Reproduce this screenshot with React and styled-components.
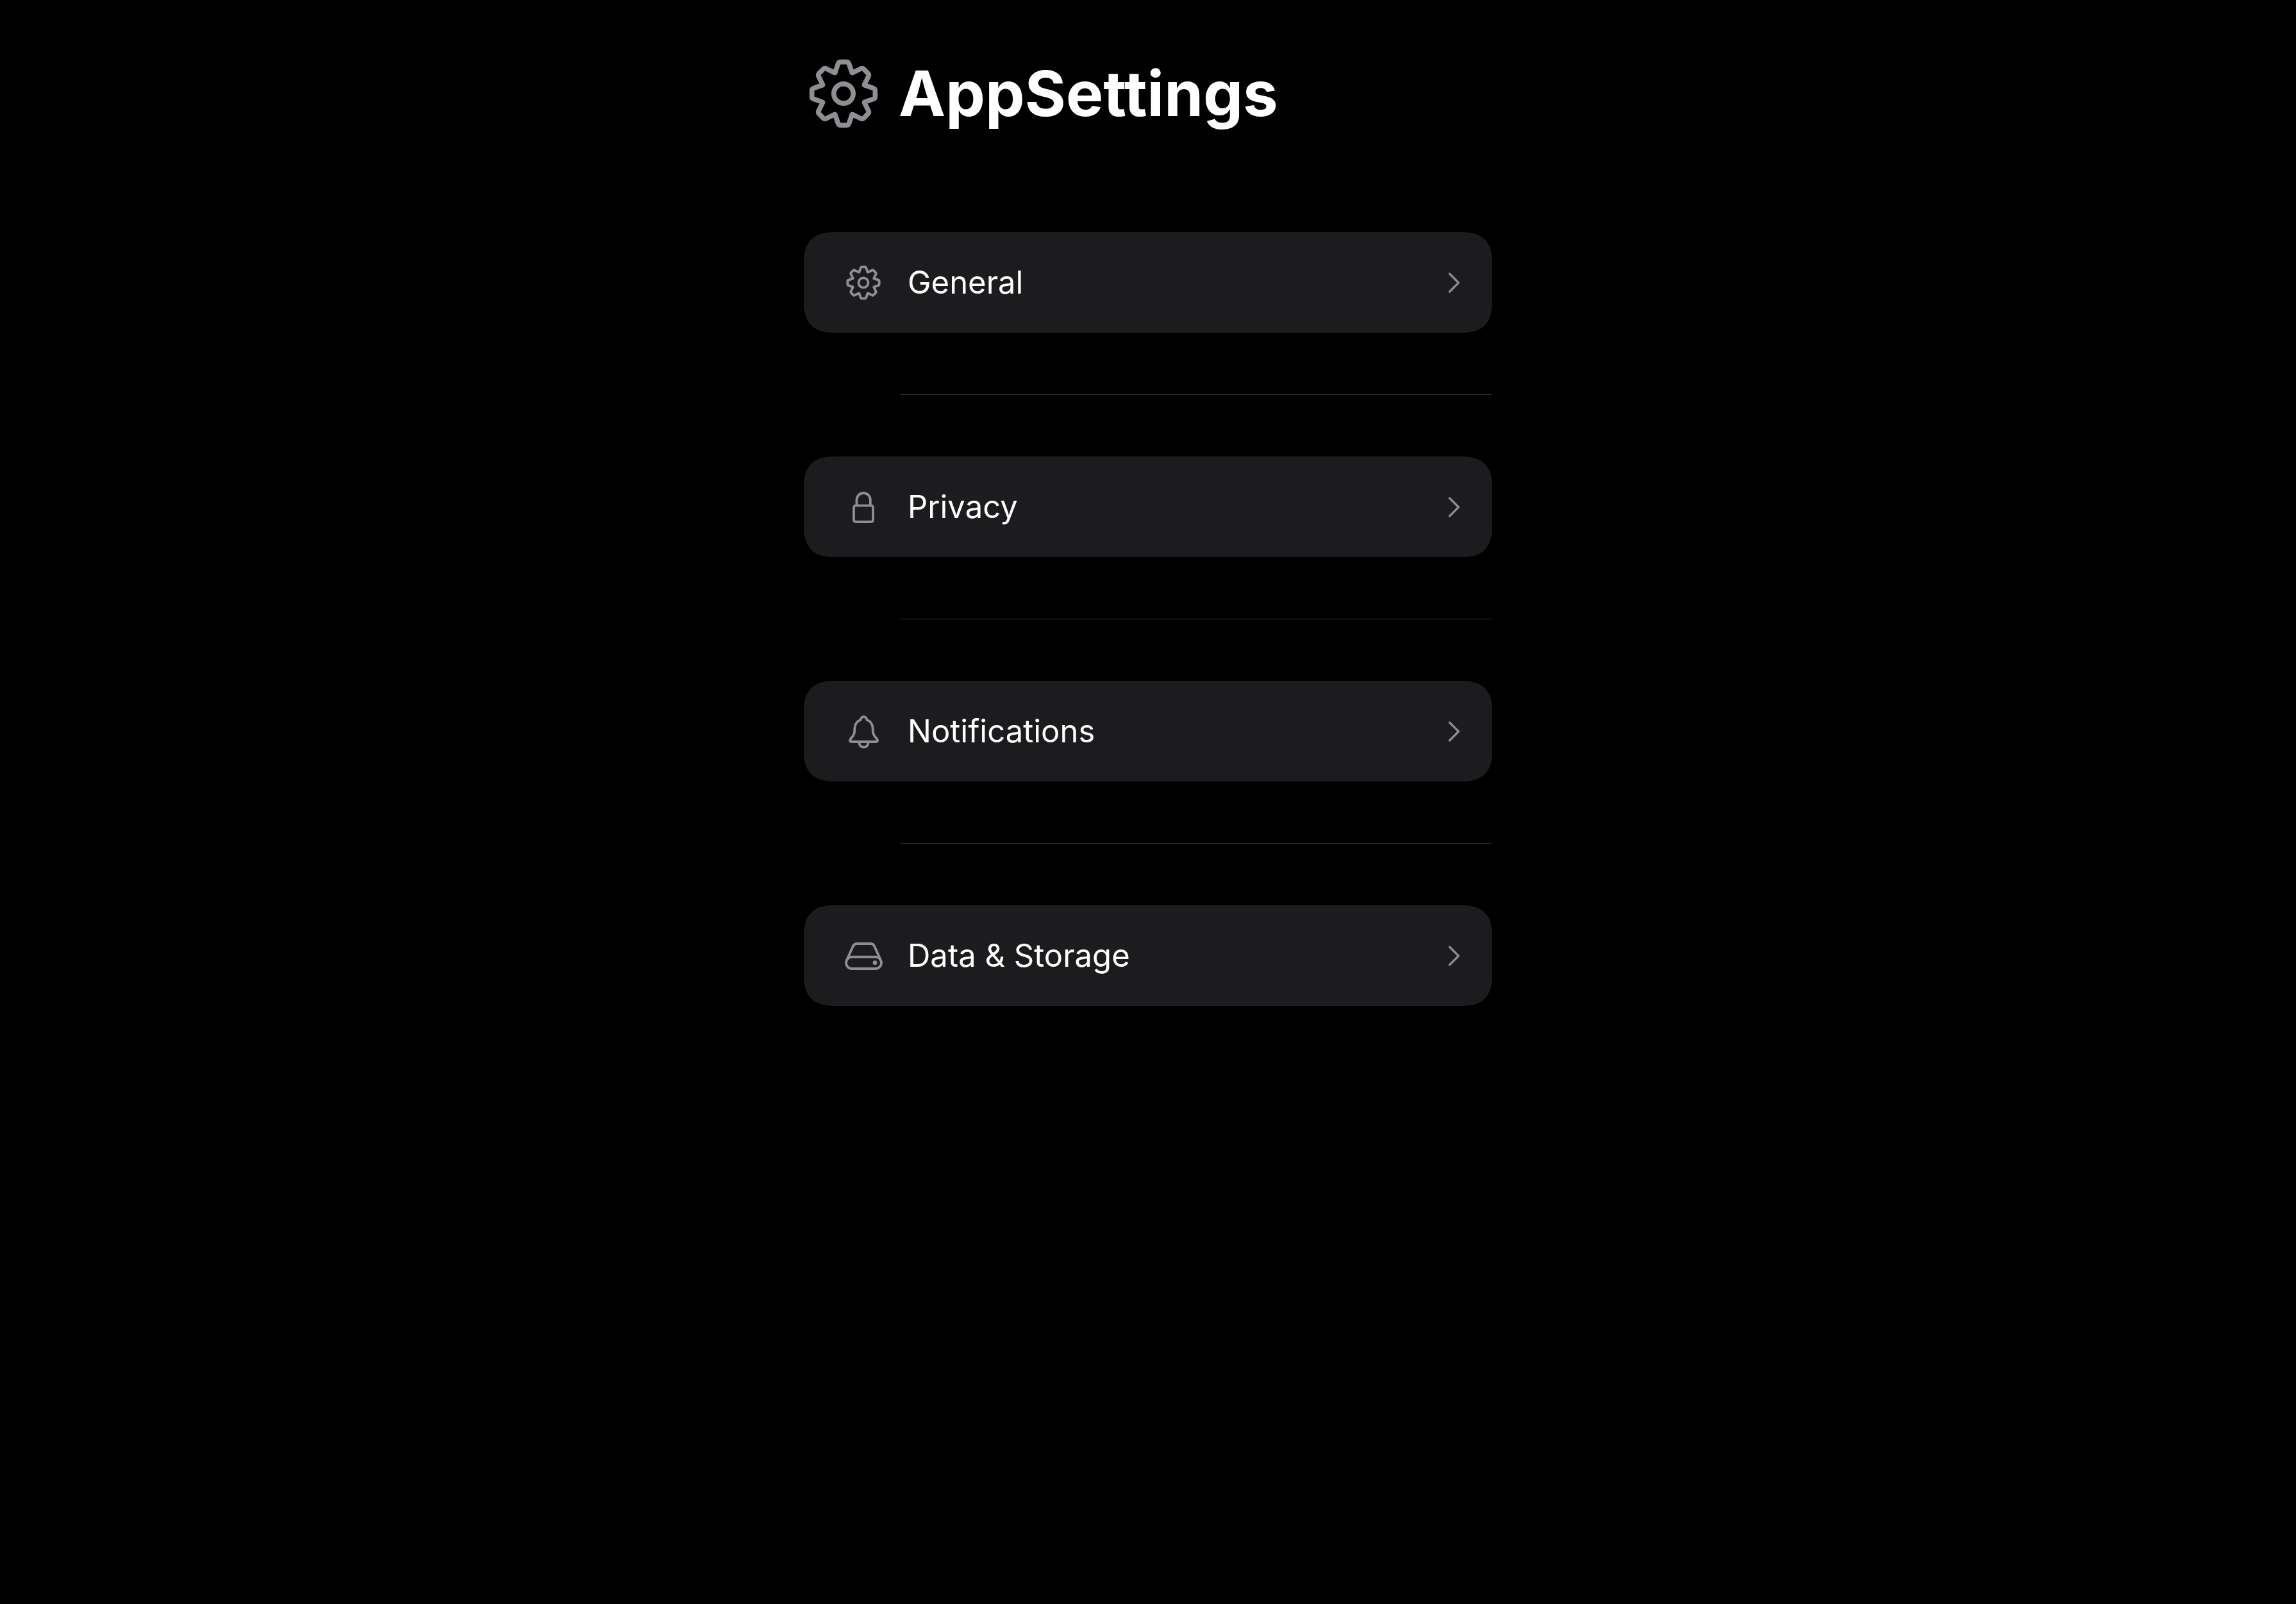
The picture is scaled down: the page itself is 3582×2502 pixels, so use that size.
import React from "react";
import styled, { createGlobalStyle } from "styled-components";

const GlobalStyle = createGlobalStyle`
  *, *::before, *::after { box-sizing: border-box; }
  body {
    margin: 0;
    background: #000000;
    color: #ffffff;
    font-family: Inter, "Liberation Sans", sans-serif;
  }
`;

const Page = styled.main`
  width: 100%;
  max-width: 1074px;
  margin: 0 auto;
  padding: 84px 0;
`;

const Header = styled.header`
  display: flex;
  align-items: center;
  gap: 24px;
  margin-bottom: 154px;
  color: #8e8e93;
`;

const Title = styled.h1`
  margin: 0;
  color: #ffffff;
  font-size: 98px;
  font-weight: 700;
  line-height: 120px;
`;

const List = styled.ul`
  list-style: none;
  margin: 0;
  padding: 0;
`;

const Item = styled.li`
  & + &::before {
    content: "";
    display: block;
    height: 1px;
    margin: 96px 0 96px 150px;
    background: #323235;
  }
`;

const Row = styled.button`
  display: flex;
  align-items: center;
  width: 100%;
  height: 157px;
  padding: 0 47px 0 63px;
  border: 0;
  border-radius: 38px;
  background: #1c1c1e;
  color: #8e8e93;
  font: inherit;
  text-align: left;
  cursor: pointer;

  @supports (corner-shape: superellipse(1.4)) {
    border-radius: 50px;
    corner-shape: superellipse(1.4);
  }
`;

const Label = styled.span`
  flex: 1;
  margin-left: 39px;
  color: #ffffff;
  font-size: 49px;
  line-height: 60px;
`;

const Icon = styled.svg`
  flex: none;
  display: block;
  width: ${(p) => p.$width}px;
  height: ${(p) => p.$height || p.$width}px;
  fill: none;
  stroke: currentColor;
`;

/* One tooth, drawn upwards from the hub, repeated every 45 degrees. */
const gearPath = (() => {
  const tooth = [[-40, -97], [-26, -138], [-23, -148], [-14, -148], [14, -148], [23, -148], [26, -138]];
  const neighbour = [40, -97];
  let d = "";
  for (let i = 0; i < 8; i += 1) {
    const a = (i * Math.PI) / 4;
    const p = [...tooth, neighbour].map(
      ([x, y]) =>
        `${(x * Math.cos(a) - y * Math.sin(a)).toFixed(2)} ${(x * Math.sin(a) + y * Math.cos(a)).toFixed(2)}`
    );
    d += `${i ? "L" : "M"}${p[0]}L${p[1]}Q${p[2]} ${p[3]}L${p[4]}Q${p[5]} ${p[6]}L${p[7]}`;
  }
  return `${d}Z`;
})();

const Gear = ({ size = 60, reach = 180 }) => (
  <Icon $width={size} viewBox={`${-reach} ${-reach} ${reach * 2} ${reach * 2}`} strokeWidth="23" aria-hidden="true">
    <path d={gearPath} strokeLinejoin="bevel" />
    <circle r="45.5" />
  </Icon>
);

const Lock = () => (
  <Icon $width={60} viewBox="0 0 180 180" strokeWidth="11.5" aria-hidden="true">
    <rect x="45" y="83" width="90" height="76" rx="9" />
    <path d="M58.5 83V56a32 32 0 0 1 64 0V83" />
  </Icon>
);

const Bell = () => (
  <Icon $width={60} viewBox="0 0 180 180" strokeWidth="11.5" strokeLinejoin="round" aria-hidden="true">
    <path d="M91.5 21C84 21 78 27 77 35C60 42 49 58 49 76C49 97 48 105 33 121C25 130 25 138 34 138H149C158 138 158 130 150 121C135 105 134 97 134 76C134 58 123 42 106 35C105 27 99 21 91.5 21Z" />
    <path d="M70.5 138v5a21 21 0 0 0 42 0v-5" />
  </Icon>
);

const Drive = () => (
  <Icon $width={60} viewBox="0 0 180 180" strokeWidth="11.5" aria-hidden="true">
    <rect x="9" y="95" width="165" height="55" rx="27.5" />
    <path d="M14 106L41 46Q47 33 60 33H123Q136 33 142 46L169 106" />
    <circle cx="144" cy="122" r="10" fill="currentColor" stroke="none" />
  </Icon>
);

const Chevron = () => (
  <Icon
    $width={24}
    $height={36}
    viewBox="0 0 24 36"
    strokeWidth="3.2"
    strokeLinecap="round"
    strokeLinejoin="round"
    aria-hidden="true"
  >
    <path d="M4.5 4L18.5 18L4.5 32" />
  </Icon>
);

const sections = [
  { label: "General", Glyph: Gear },
  { label: "Privacy", Glyph: Lock },
  { label: "Notifications", Glyph: Bell },
  { label: "Data & Storage", Glyph: Drive },
];

export default function App() {
  return (
    <>
      <GlobalStyle />
      <Page>
        <Header>
          <Gear size={124} reach={186} />
          <Title>AppSettings</Title>
        </Header>
        <List>
          {sections.map(({ label, Glyph }) => (
            <Item key={label}>
              <Row type="button">
                <Glyph />
                <Label>{label}</Label>
                <Chevron />
              </Row>
            </Item>
          ))}
        </List>
      </Page>
    </>
  );
}
